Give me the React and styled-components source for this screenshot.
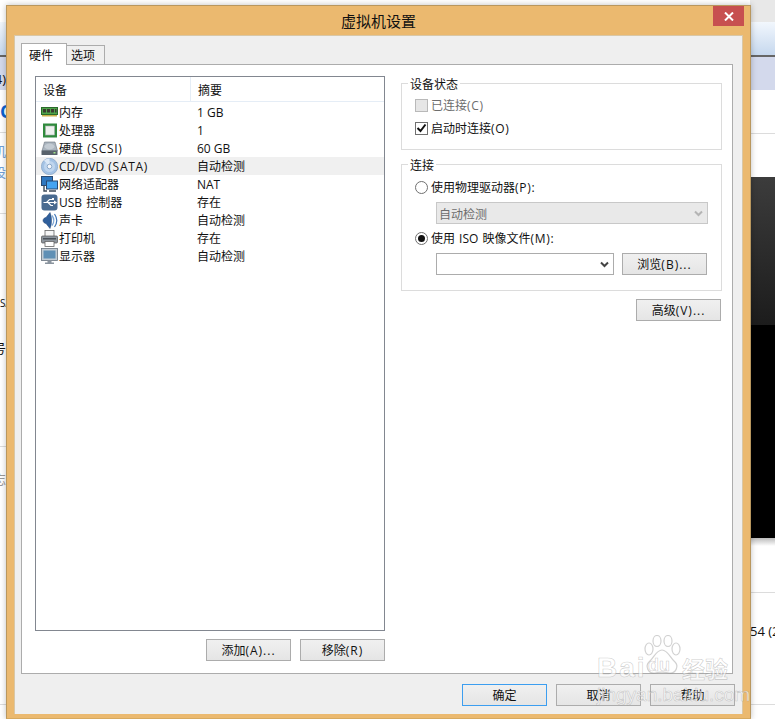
import React from 'react';
import styled, { createGlobalStyle } from 'styled-components';

const UI_FONT = `"Open Sans", "Noto Sans CJK SC", sans-serif`;

const GlobalStyle = createGlobalStyle`
  html, body { margin: 0; padding: 0; background: #fff; }
  body { font-family: ${UI_FONT}; font-size: 12px; color: #111; }
  * { box-sizing: border-box; }
`;

const Desktop = styled.div`
  position: relative;
  width: 775px;
  height: 719px;
  overflow: hidden;
  background: #fff;
`;

const Strip = styled.div`
  position: absolute;
  top: 0;
  bottom: 0;
  ${p => (p.$side === 'left' ? 'left: 0; width: 6px;' : 'right: 0; width: 25px;')}
  overflow: hidden;
  display: flex;
  flex-direction: column;
`;

const Chunk = styled.div`
  height: ${p => p.$h}px;
  flex: none;
  display: flex;
  align-items: center;
  justify-content: ${p => (p.$end ? 'flex-end' : 'flex-start')};
  padding-top: ${p => p.$pt || 0}px;
  font-size: ${p => p.$size || 13}px;
  font-weight: ${p => (p.$bold ? 700 : 400)};
  white-space: nowrap;
  color: ${p => p.$color || '#111'};
  background: ${p => p.$bg || 'transparent'};
  border-bottom: ${p => (p.$line ? '1px solid #dcdcdc' : '0')};
`;

const Window = styled.div`
  position: absolute;
  left: 6px;
  top: 5px;
  width: 745px;
  height: 714px;
  background: #ebb96f;
  border: 1px solid #b9975e;
  border-bottom-color: #d6a95f;
  box-shadow: 0 0 6px rgba(0, 0, 0, 0.25);
  padding: 0 7px 4px 7px;
  display: flex;
  flex-direction: column;
`;

const TitleBar = styled.div`
  height: 29px;
  flex: none;
  display: flex;
  align-items: center;
  justify-content: center;
  font-size: 15px;
  color: #111;
`;

const CloseBox = styled.div`
  position: absolute;
  top: 0;
  right: 6px;
  width: 31px;
  height: 20px;
  background: #c75050;
  display: flex;
  align-items: center;
  justify-content: center;
`;

const Client = styled.div`
  flex: 1;
  background: #efefef;
  border: 1px solid #d9c7a6;
  border-bottom: 0;
  padding: 7px 9px 8px 6px;
  display: flex;
  flex-direction: column;
`;

const TabRow = styled.div`
  display: flex;
  align-items: flex-end;
  height: 21px;
  flex: none;
  position: relative;
  z-index: 1;
`;

const Tab = styled.div`
  height: ${p => (p.$active ? 22 : 20)}px;
  width: ${p => (p.$active ? 46 : 39)}px;
  margin-bottom: -1px;
  margin-left: ${p => (p.$active ? 0 : -1)}px;
  background: ${p => (p.$active ? '#fff' : '#f0f0f0')};
  border: 1px solid #acacac;
  border-bottom: ${p => (p.$active ? '0' : '1px solid #acacac')};
  display: flex;
  align-items: center;
  padding-left: ${p => (p.$active ? 7 : 4)}px;
  font-size: 12px;
`;

const Pane = styled.div`
  height: 610px;
  flex: none;
  background: #fff;
  border: 1px solid #acacac;
  padding: 11px 11px 12px 13px;
  display: flex;
  gap: 16px;
`;

const LeftColumn = styled.div`
  width: 350px;
  flex: none;
  display: flex;
  flex-direction: column;
`;

const DeviceList = styled.div`
  height: 555px;
  flex: none;
  border: 1px solid #828790;
  display: flex;
  flex-direction: column;
  background: #fff;
`;

const ListHeader = styled.div`
  height: 25px;
  flex: none;
  display: grid;
  grid-template-columns: 154px 1fr;
  border-bottom: 1px solid #e5edf6;
  margin-bottom: 1px;
`;

const HeaderCell = styled.div`
  display: flex;
  align-items: center;
  padding-left: 7px;
  border-left: ${p => (p.$divided ? '1px solid #e5edf6' : '0')};
  padding-top: 1px;
`;

const DeviceRow = styled.div`
  height: 18px;
  flex: none;
  display: grid;
  grid-template-columns: 154px 1fr;
  align-items: center;
  background: ${p => (p.$selected ? '#f0f0f0' : 'transparent')};
`;

const DeviceName = styled.div`
  display: flex;
  align-items: center;
  padding-left: 5px;
  gap: 1px;
  white-space: pre;
  word-spacing: 1px;
`;

const IconBox = styled.svg`
  width: 17px;
  height: 17px;
  flex: none;
`;

const Summary = styled.div`
  padding-left: 7px;
  white-space: nowrap;
`;

const ButtonRow = styled.div`
  display: flex;
  justify-content: flex-end;
  gap: 9px;
  margin-top: 8px;
`;

const Button = styled.div`
  --paren-gap: 1px;
  width: 85px;
  height: 22px;
  flex: none;
  border: 1px solid ${p => (p.$focused ? '#3c9ef0' : '#acacac')};
  background: linear-gradient(#f0f0f0, #e5e5e5);
  display: flex;
  align-items: center;
  justify-content: center;
  font-size: 12px;
  white-space: pre;
`;

const Paren = styled.span`
  letter-spacing: var(--paren-gap, 0.7px);
`;

const RightColumn = styled.div`
  width: 321px;
  flex: none;
  padding-top: 7px;
  display: flex;
  flex-direction: column;
`;

const Group = styled.fieldset`
  margin: 0 0 14px;
  padding: 0;
  height: ${p => p.$h}px;
  position: relative;
  border: 1px solid #dcdcdc;
  min-width: 0;
  display: flex;
  flex-direction: column;
`;

const Legend = styled.div`
  position: absolute;
  top: -7px;
  left: 6px;
  padding: 0 2px;
  background: #fff;
  line-height: 16px;
`;

const Option = styled.div`
  display: flex;
  align-items: center;
  gap: 3px;
  height: 22px;
  padding-left: 13px;
  margin-top: ${p => p.$mt || 0}px;
  color: ${p => (p.$disabled ? '#6d6d6d' : '#111')};
  white-space: pre;
  word-spacing: 1px;
`;

const CheckBox = styled.div`
  width: 13px;
  height: 13px;
  flex: none;
  border: 1px solid ${p => (p.$disabled ? '#b9b9b9' : '#707070')};
  background: ${p => (p.$disabled ? '#e6e6e6' : '#fff')};
  display: flex;
  align-items: center;
  justify-content: center;
`;

const Radio = styled.div`
  width: 13px;
  height: 13px;
  flex: none;
  border-radius: 50%;
  border: 1px solid #707070;
  background: #fff;
  display: flex;
  align-items: center;
  justify-content: center;
  &::after {
    content: '';
    width: 7px;
    height: 7px;
    border-radius: 50%;
    background: ${p => (p.$on ? '#111' : 'transparent')};
  }
`;

const ComboRow = styled.div`
  display: flex;
  align-items: center;
  gap: 8px;
  padding-left: 34px;
  height: 22px;
  margin-top: 4px;
`;

const Combo = styled.div`
  width: ${p => p.$w}px;
  height: 22px;
  flex: none;
  border: 1px solid ${p => (p.$disabled ? '#c8c8c8' : '#acacac')};
  background: ${p => (p.$disabled ? '#e9e9e9' : '#fff')};
  color: #6d6d6d;
  display: flex;
  align-items: center;
  justify-content: space-between;
  padding: 1px 4px 0 2px;
`;

const AdvancedRow = styled.div`
  display: flex;
  justify-content: flex-end;
  padding-right: 1px;
  margin-top: -6px;
`;

const Footer = styled.div`
  display: flex;
  justify-content: flex-end;
  gap: 9px;
  margin-top: 10px;
  margin-right: -2px;
`;

const Watermark = styled.div`
  position: absolute;
  left: 594px;
  top: 634px;
  width: 145px;
  height: 72px;
  pointer-events: none;
  color: rgba(255, 255, 255, 0.65);
  -webkit-text-stroke: 0.6px rgba(130, 130, 130, 0.4);
`;

const WmBrand = styled.div`
  position: absolute;
  left: 3px;
  top: 18px;
  font: bold 28px "Liberation Sans", sans-serif;
  letter-spacing: 2px;
  line-height: 32px;
`;

const WmDu = styled.div`
  position: absolute;
  left: 54px;
  top: 21px;
  font: bold 18px "Liberation Sans", sans-serif;
  line-height: 20px;
`;

const WmCn = styled.div`
  position: absolute;
  left: 88px;
  top: 21px;
  font: bold 23px "Noto Sans CJK SC", sans-serif;
  line-height: 26px;
`;

const WmUrl = styled.div`
  position: absolute;
  left: 3px;
  top: 50px;
  font: 19px "Liberation Sans", sans-serif;
  line-height: 22px;
  white-space: nowrap;
`;

const WmPaw = styled.svg`
  position: absolute;
  left: 49px;
  top: 1px;
  width: 38px;
  height: 42px;
`;

// latin runs with brackets sit wider in the original than in our font
const Mixed = ({ text }) =>
  text.split(/(\([^)]*\)[.:]*)/).map((part, i) =>
    i % 2 ? <Paren key={i}>{part}</Paren> : part
  );

const Arrow = ({ color }) => (
  <svg width="9" height="7" viewBox="0 0 9 7">
    <path d="M1 1.500 L4.500 5 L8 1.500" fill="none" stroke={color} strokeWidth="2" />
  </svg>
);

const icons = {
  memory: (
    <>
      <rect x="0.500" y="3.500" width="16" height="7" fill="#4fa44a" stroke="#2a6a2a" />
      <path d="M2 5h3v3.500H2zM6 5h3v3.500H6zM10 5h3v3.500h-3zM14 5h1.500v3.500H14z" fill="#3a3a2e" />
      <path d="M1 11h15v1.500H1z" fill="#c9b04a" />
    </>
  ),
  cpu: (
    <>
      <rect x="2" y="1.500" width="14" height="14" fill="#2f8a3c" />
      <rect x="4.500" y="4" width="9" height="9" fill="#eef0ee" stroke="#a6aeaa" strokeWidth="0.6" />
    </>
  ),
  disk: (
    <>
      <path d="M3.500 2h10.500l2.500 9H1z" fill="#aab4be" stroke="#6d7680" strokeWidth="0.6" />
      <ellipse cx="8.500" cy="6.500" rx="5" ry="3" fill="#c3cbd3" />
      <rect x="0.500" y="10.500" width="16" height="4.500" rx="0.500" fill="#59626b" />
      <rect x="12.500" y="12" width="2" height="1.500" fill="#9fe48a" />
    </>
  ),
  cd: (
    <>
      <circle cx="8.500" cy="8.500" r="8.200" fill="#a3c2e4" stroke="#7d9cc0" strokeWidth="0.6" />
      <circle cx="8.500" cy="8.500" r="5.500" fill="#bfd5ee" />
      <path d="M8.500 8.500 L3 2.500 A8 8 0 0 1 8.500 0.500z" fill="#dbe8f6" />
      <circle cx="8.500" cy="8.500" r="2.300" fill="#f6f8fb" stroke="#6f90b8" strokeWidth="0.7" />
    </>
  ),
  network: (
    <>
      <rect x="0.500" y="0.500" width="11" height="9" fill="#2f78c0" stroke="#2b4a70" />
      <rect x="5.500" y="5" width="11" height="8" fill="#45a4f0" stroke="#2b4a70" />
      <path d="M8 15h7M3 10v5h3" fill="none" stroke="#3c4a58" strokeWidth="1.400" />
    </>
  ),
  usb: (
    <>
      <rect x="0.500" y="0.500" width="16" height="16" rx="3" fill="#4a6b90" />
      <path d="M2.500 8.500h11M5.500 8.500l3-3h2.500M7 8.500l3 3h2" fill="none" stroke="#fff" strokeWidth="1.200" />
      <path d="M13 6.500l3 2-3 2z" fill="#fff" />
      <rect x="11" y="4" width="2" height="2" fill="#fff" />
    </>
  ),
  sound: (
    <>
      <path d="M2 8.500c0-2 2-3 3-3l4-5c2 4 2 12 0 16l-4-5c-1 0-3-1-3-3z" fill="#2f5f9c" stroke="#1f3f6c" strokeWidth="0.500" />
      <path d="M11 3.500c2.200 3 2.200 7 0 10" fill="none" stroke="#7fa8d6" strokeWidth="1.300" />
      <path d="M13.500 2c2.800 4 2.800 9 0 13" fill="none" stroke="#3f74b4" strokeWidth="1.200" />
    </>
  ),
  printer: (
    <>
      <rect x="4" y="0.500" width="9" height="6" fill="#f6f6f6" stroke="#666" strokeWidth="0.800" />
      <rect x="0.500" y="6" width="16" height="7" rx="1" fill="#8e969e" stroke="#555" strokeWidth="0.700" />
      <rect x="2" y="8" width="13" height="1.500" fill="#4a5158" />
      <rect x="4" y="11.500" width="9" height="5" fill="#fff" stroke="#666" strokeWidth="0.800" />
    </>
  ),
  display: (
    <>
      <rect x="0.500" y="0.500" width="16" height="12" fill="#c3ccd5" stroke="#68737e" strokeWidth="0.800" />
      <rect x="2.500" y="2.500" width="12" height="8" fill="#5f8fb5" />
      <path d="M6.500 12.500h4v2h-4zM4 14.500h9V16H4z" fill="#8a949e" />
    </>
  ),
};

const devices = [
  ['memory', '内存', '1 GB'],
  ['cpu', '处理器', '1'],
  ['disk', '硬盘 (SCSI)', '60 GB'],
  ['cd', 'CD/DVD (SATA)', '自动检测', true],
  ['network', '网络适配器', 'NAT'],
  ['usb', 'USB 控制器', '存在'],
  ['sound', '声卡', '自动检测'],
  ['printer', '打印机', '存在'],
  ['display', '显示器', '自动检测'],
];

function App() {
  return (
    <Desktop>
      <GlobalStyle />
      <Strip $side="left">
        <Chunk $h={22} $bg="#fff" />
        <Chunk $h={33} $bg="linear-gradient(#f2f7fd, #c6d8ee)" />
        <Chunk $h={2} $bg="#666" />
        <Chunk $h={33} $bg="#d3d9ec" $end $pt={10}>4)</Chunk>
        <Chunk $h={43} $line $color="#0a62d0" $size={18} $bold>C</Chunk>
        <Chunk $h={6} />
        <Chunk $h={22} $color="#6f9fd8" $end>机</Chunk>
        <Chunk $h={20} $color="#6f9fd8" $end>设</Chunk>
        <Chunk $h={33} $line />
        <Chunk $h={78} />
        <Chunk $h={22} $size={10}>SA</Chunk>
        <Chunk $h={22} />
        <Chunk $h={22} $end>号</Chunk>
        <Chunk $h={89} $line />
        <Chunk $h={20} />
        <Chunk $h={22} $color="#999" $end>忘</Chunk>
        <Chunk $h={216} $line />
      </Strip>
      <Strip $side="right">
        <Chunk $h={22} $bg="#e8e8e8" />
        <Chunk $h={33} $bg="linear-gradient(#f2f7fd, #c6d8ee)" />
        <Chunk $h={2} $bg="#666" />
        <Chunk $h={33} $bg="#d3d9ec" />
        <Chunk $h={44} $line />
        <Chunk $h={43} />
        <Chunk $h={148} $bg="linear-gradient(#3c3c3c, #1c1c1c)" />
        <Chunk $h={213} $bg="#000" />
        <Chunk $h={55} $line $bg="linear-gradient(#bbb, #fff 8px)" />
        <Chunk $h={27} />
        <Chunk $h={22}>54 (2</Chunk>
        <Chunk $h={63} $line />
      </Strip>
      <Window>
        <TitleBar>虚拟机设置</TitleBar>
        <CloseBox>
          <svg width="10" height="9" viewBox="0 0 10 9">
            <path d="M1 0.500 L9 8.500 M9 0.500 L1 8.500" stroke="#fff" strokeWidth="2" />
          </svg>
        </CloseBox>
        <Client>
          <TabRow>
            <Tab $active>硬件</Tab>
            <Tab>选项</Tab>
          </TabRow>
          <Pane>
            <LeftColumn>
              <DeviceList>
                <ListHeader>
                  <HeaderCell>设备</HeaderCell>
                  <HeaderCell $divided>摘要</HeaderCell>
                </ListHeader>
                {devices.map(([icon, name, summary, selected]) => (
                  <DeviceRow key={icon} $selected={selected}>
                    <DeviceName>
                      <IconBox viewBox="0 0 17 17">{icons[icon]}</IconBox>
                      <span><Mixed text={name} /></span>
                    </DeviceName>
                    <Summary>{summary}</Summary>
                  </DeviceRow>
                ))}
              </DeviceList>
              <ButtonRow>
                <Button><Mixed text="添加(A)..." /></Button>
                <Button><Mixed text="移除(R)" /></Button>
              </ButtonRow>
            </LeftColumn>
            <RightColumn>
              <Group $h={67}>
                <Legend>设备状态</Legend>
                <Option $disabled $mt={10}>
                  <CheckBox $disabled />
                  <span><Mixed text="已连接(C)" /></span>
                </Option>
                <Option $mt={1}>
                  <CheckBox>
                    <svg width="11" height="10" viewBox="0 0 11 10">
                      <path d="M1.500 5 L4.500 8 L9.500 1.500" fill="none" stroke="#111" strokeWidth="2" />
                    </svg>
                  </CheckBox>
                  <span><Mixed text="启动时连接(O)" /></span>
                </Option>
              </Group>
              <Group $h={127}>
                <Legend>连接</Legend>
                <Option $mt={11}>
                  <Radio />
                  <span><Mixed text="使用物理驱动器(P):" /></span>
                </Option>
                <ComboRow>
                  <Combo $w={272} $disabled>
                    自动检测
                    <Arrow color="#b4b4b4" />
                  </Combo>
                </ComboRow>
                <Option $mt={3}>
                  <Radio $on />
                  <span><Mixed text="使用 ISO 映像文件(M):" /></span>
                </Option>
                <ComboRow>
                  <Combo $w={178}>
                    <span />
                    <Arrow color="#444" />
                  </Combo>
                  <Button><Mixed text="浏览(B)..." /></Button>
                </ComboRow>
              </Group>
              <AdvancedRow>
                <Button><Mixed text="高级(V)..." /></Button>
              </AdvancedRow>
            </RightColumn>
          </Pane>
          <Footer>
            <Button $focused>确定</Button>
            <Button>取消</Button>
            <Button>帮助</Button>
          </Footer>
        </Client>
      </Window>
      <Watermark>
        <WmPaw viewBox="0 0 38 42">
          <g fill="rgba(255,255,255,0.45)" stroke="rgba(140,140,140,0.4)" strokeWidth="1.200">
            <ellipse cx="6" cy="14" rx="4" ry="6" />
            <ellipse cx="14" cy="6" rx="4" ry="5.500" />
            <ellipse cx="25" cy="6" rx="4" ry="5.500" />
            <ellipse cx="33" cy="14" rx="4" ry="6" />
            <path d="M19 15c-6 0-8 8-13 12-4 4-1 12 6 11 4-1 10-1 14 0 7 1 10-7 6-11-5-4-7-12-13-12z" />
          </g>
        </WmPaw>
        <WmBrand>Bai</WmBrand>
        <WmDu>du</WmDu>
        <WmCn>经验</WmCn>
        <WmUrl>jingyan.baidu.com</WmUrl>
      </Watermark>
    </Desktop>
  );
}

export default App;
